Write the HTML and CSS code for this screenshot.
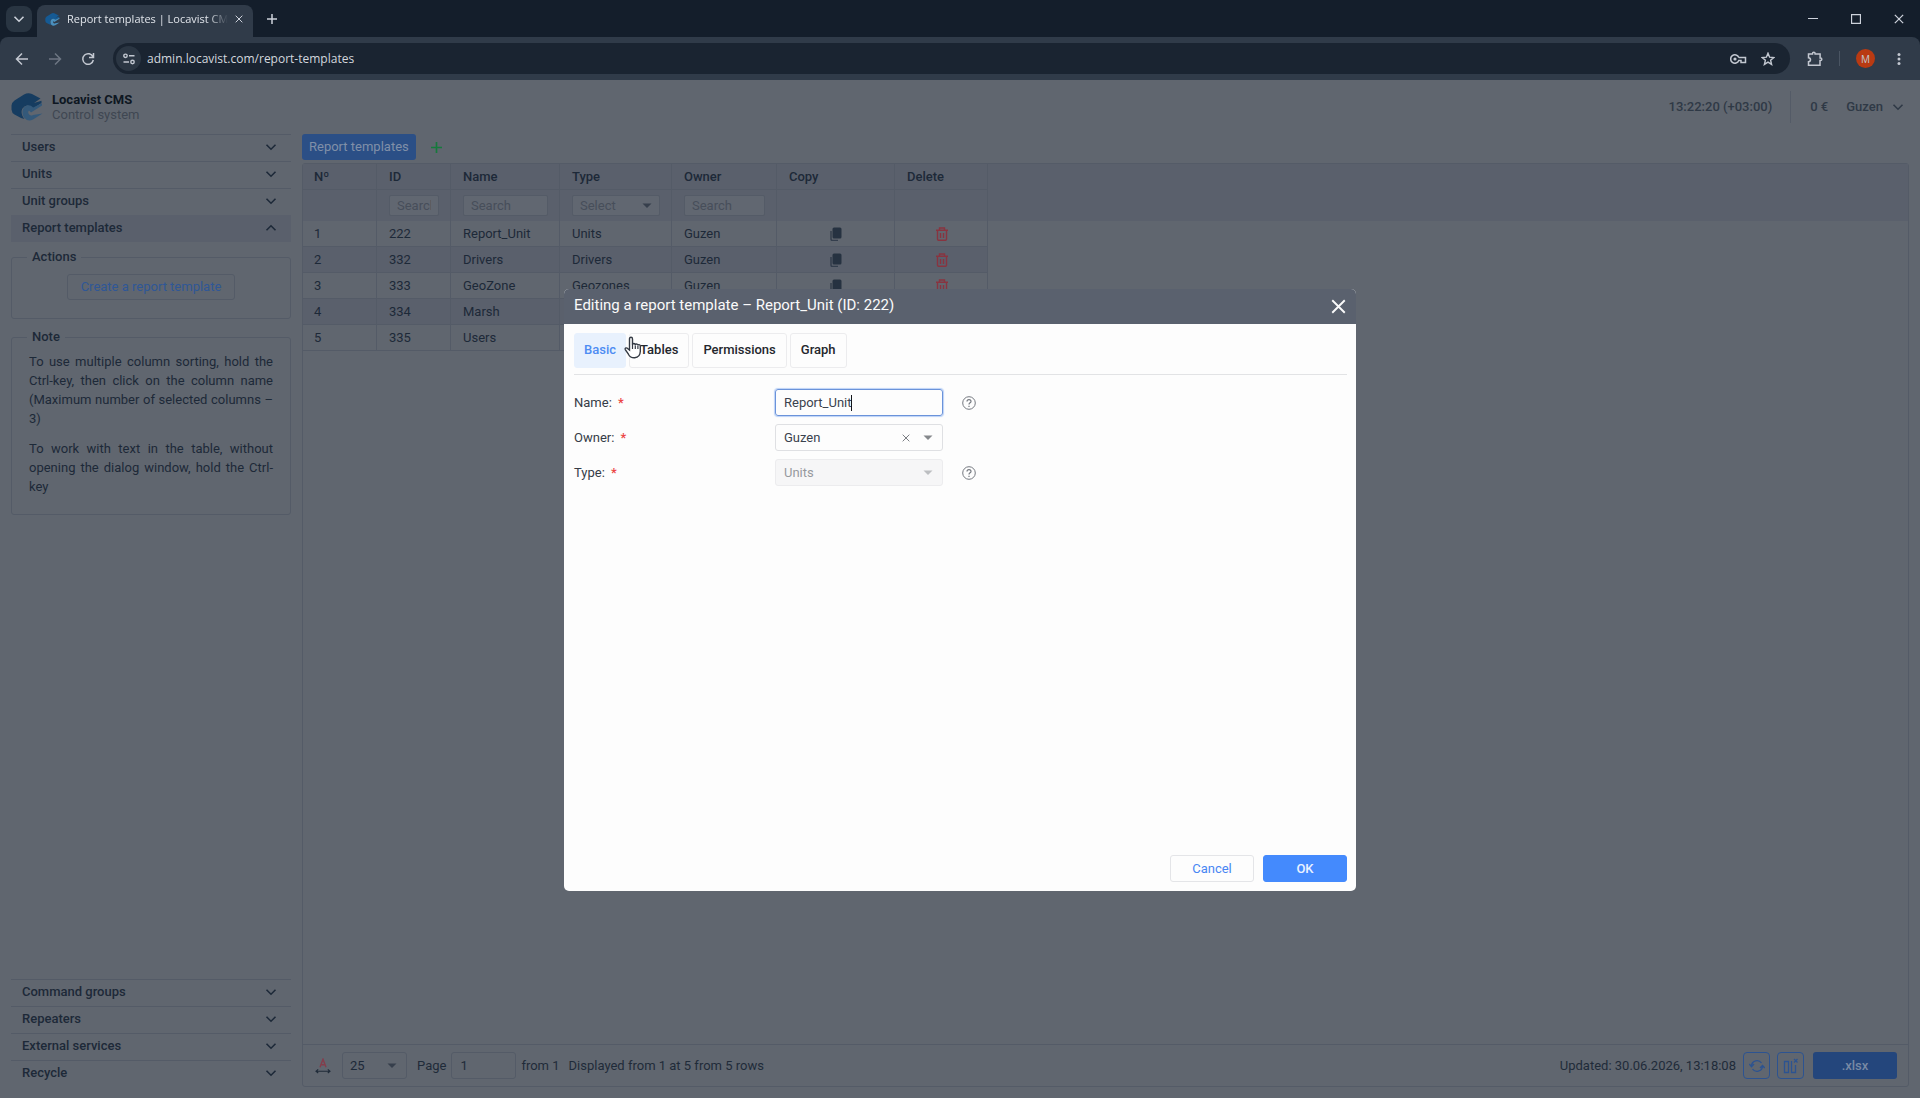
FILE: index.html
```html
<!DOCTYPE html>
<html lang="en">
<head>
<meta charset="utf-8">
<title>Report templates | Locavist CMS</title>
<link rel="stylesheet" href="styles.css">
</head>
<body>
<svg class="defs" width="0" height="0" aria-hidden="true">
  <symbol id="chev" viewBox="0 0 12 12"><path d="M1.500 3.800 6 8.200l4.500-4.400" fill="none" stroke="currentColor" stroke-width="1.600"/></symbol>
  <symbol id="caret" viewBox="0 0 10 6"><path d="M.5.500h9L5 5z" fill="currentColor"/></symbol>
  <symbol id="cross" viewBox="0 0 12 12"><path d="M1 1l10 10M11 1 1 11" fill="none" stroke="currentColor" stroke-width="1.500"/></symbol>
  <symbol id="plus" viewBox="0 0 12 12"><path d="M6 0v12M0 6h12" fill="none" stroke="currentColor" stroke-width="1.800"/></symbol>
  <symbol id="logo" viewBox="0 0 32 28">
    <path d="M13 1.500Q17-.8 21 1L29.500 5.500 23 10 30.500 7.800V10L22 15.500Q16 9.500 11.500 15.500C9.500 19 11 23 13.500 26L10 25 3.500 21.500Q.8 20 .5 16.500V12.500Q.8 9.500 3.500 7.500z" fill="var(--logo-a)"/>
    <path d="M31.500 20.500 22 26.500Q16.500 29 13 24.500C9.500 18.500 12.500 12.500 17 12.200Q20 12 22.200 14.500L31 10.300V12.500L20 19.500 18 17.500Q16.800 18.500 17.500 20.500 19 23.500 22 22z" fill="var(--logo-b)"/>
  </symbol>
  <symbol id="copy" viewBox="0 0 12 14"><path d="M1 4v8q0 1.500 1.500 1.500H8" fill="none" stroke="currentColor" stroke-width="1.500" opacity=".75"/><rect x="2.500" y=".5" width="9" height="11" rx="1.500" fill="currentColor"/></symbol>
  <symbol id="trash" viewBox="0 0 12 14"><path d="M0 3.200h12M3.500 3V1h5v2M1.500 3.200v9q0 1.100 1.100 1.100h6.800q1.100 0 1.100-1.100v-9M4.500 6v5M7.500 6v5" fill="none" stroke="currentColor" stroke-width="1.400"/></symbol>
  <symbol id="help" viewBox="0 0 14 14"><circle cx="7" cy="7" r="6.300" fill="none" stroke="currentColor"/><path d="M5 5.600C5 3 9 3 9 5.400 9 6.900 7 6.800 7 8.500M7 9.700v1.300" fill="none" stroke="currentColor" stroke-width="1.200"/></symbol>
</svg>

<header class="browser">
  <div class="tabstrip">
    <button class="tab-search" aria-label="Search tabs"><svg width="12" height="12"><use href="#chev"/></svg></button>
    <div class="browser-tab">
      <svg class="favicon" width="15" height="13"><use href="#logo"/></svg>
      <span class="tab-title">Report templates | Locavist CMS</span>
      <button aria-label="Close tab"><svg width="8" height="8"><use href="#cross"/></svg></button>
    </div>
    <button class="new-tab" aria-label="New tab"><svg width="10" height="10"><use href="#plus"/></svg></button>
    <div class="window-buttons">
      <button aria-label="Minimize"><svg width="10" height="10" viewBox="0 0 10 10"><path d="M0 4.500h10" stroke="currentColor"/></svg></button>
      <button aria-label="Maximize"><svg width="10" height="10" viewBox="0 0 10 10"><path d="M.5.500h9v9h-9z" fill="none" stroke="currentColor" stroke-width="1.300"/></svg></button>
      <button aria-label="Close"><svg width="10" height="10"><use href="#cross"/></svg></button>
    </div>
  </div>
  <div class="toolbar">
    <button aria-label="Back"><svg width="14" height="14" viewBox="0 0 14 14"><path d="M13 7H2M7 1.500 1.500 7 7 12.500" fill="none" stroke="currentColor" stroke-width="1.500"/></svg></button>
    <button class="dim" aria-label="Forward"><svg width="14" height="14" viewBox="0 0 14 14"><path d="M1 7h11M7 1.500 12.500 7 7 12.500" fill="none" stroke="currentColor" stroke-width="1.500"/></svg></button>
    <button aria-label="Reload"><svg width="14" height="14" viewBox="0 0 14 14"><path d="M12 5A5.300 5.300 0 1 0 12.300 8M12.500 1v4.500H8" fill="none" stroke="currentColor" stroke-width="1.500"/></svg></button>
    <div class="address">
      <span class="site-info"><svg width="12" height="12" viewBox="0 0 12 12"><g fill="none" stroke="currentColor" stroke-width="1.400"><circle cx="2.500" cy="2.800" r="1.700"/><path d="M6 2.800h5.500M.5 9H6"/><circle cx="9.500" cy="9" r="1.700"/></g></svg></span>
      <input type="text" aria-label="Address" value="admin.locavist.com/report-templates">
      <svg width="17" height="10" viewBox="0 0 17 10"><g fill="none" stroke="currentColor" stroke-width="1.500"><path d="M8.800 3.500a4.200 4.200 0 1 0 0 3H11V8.500h4.500v-5H8.800"/></g><circle cx="5" cy="5" r="1.600" fill="currentColor"/></svg>
      <svg width="14" height="14" viewBox="0 0 14 14"><path d="M7 1.200 8.600 5.200l4.200.3-3.200 2.700 1 4.200L7 10.100l-3.600 2.300 1-4.200L1.200 5.500l4.200-.3z" fill="none" stroke="currentColor" stroke-width="1.400"/></svg>
    </div>
    <button class="ext" aria-label="Extensions"><svg width="16" height="16" viewBox="0 0 16 16"><path d="M2.500 3H5.500V2.500a1.300 1.300 0 0 1 2.600 0V3h5v4h.4a1.300 1.300 0 0 1 0 2.600H13v4.600H1.500v-3.500q2-.2 2-2t-2-2V3z" fill="none" stroke="currentColor" stroke-width="1.500"/></svg></button>
    <span class="bar"></span>
    <button class="avatar">M</button>
    <button class="more" aria-label="Menu"><svg width="4" height="12" viewBox="0 0 4 12"><g fill="currentColor"><circle cx="2" cy="1.500" r="1.500"/><circle cx="2" cy="6" r="1.500"/><circle cx="2" cy="10.500" r="1.500"/></g></svg></button>
  </div>
</header>

<div class="app">
  <header class="app-header">
    <svg class="app-logo" width="32" height="28"><use href="#logo"/></svg>
    <div class="brand"><strong>Locavist CMS</strong><span>Control system</span></div>
    <time class="clock">13:22:20 (+03:00)</time>
    <span class="balance">0 €</span>
    <button class="user">Guzen <svg width="12" height="12"><use href="#chev"/></svg></button>
  </header>

  <div class="columns">
    <nav class="sidebar">
      <button class="item">Users<svg width="12" height="12"><use href="#chev"/></svg></button>
      <button class="item">Units<svg width="12" height="12"><use href="#chev"/></svg></button>
      <button class="item">Unit groups<svg width="12" height="12"><use href="#chev"/></svg></button>
      <button class="item open">Report templates<svg width="12" height="12"><use href="#chev"/></svg></button>
      <fieldset class="group actions">
        <legend>Actions</legend>
        <button class="create">Create a report template</button>
      </fieldset>
      <fieldset class="group note">
        <legend>Note</legend>
        <p>To use multiple column sorting, hold the Ctrl-key, then click on the column name (Maximum number of selected columns – 3)</p>
        <p>To work with text in the table, without opening the dialog window, hold the Ctrl-key</p>
      </fieldset>
      <div class="lower">
        <button class="item">Command groups<svg width="12" height="12"><use href="#chev"/></svg></button>
        <button class="item">Repeaters<svg width="12" height="12"><use href="#chev"/></svg></button>
        <button class="item">External services<svg width="12" height="12"><use href="#chev"/></svg></button>
        <button class="item">Recycle<svg width="12" height="12"><use href="#chev"/></svg></button>
      </div>
    </nav>

    <main class="main">
      <div class="views">
        <button class="view">Report templates</button>
        <button class="add" aria-label="Add"><svg width="11" height="11"><use href="#plus"/></svg></button>
      </div>
      <section class="panel">
        <div class="grid-area">
          <table class="grid">
            <colgroup><col class="c-no"><col class="c-id"><col class="c-name"><col class="c-type"><col class="c-owner"><col class="c-copy"><col class="c-delete"></colgroup>
            <thead>
              <tr class="heads"><th>Nº</th><th>ID</th><th>Name</th><th>Type</th><th>Owner</th><th>Copy</th><th>Delete</th></tr>
              <tr class="filters">
                <td></td>
                <td><input type="text" placeholder="Search" aria-label="Search ID"></td>
                <td><input type="text" placeholder="Search" aria-label="Search name"></td>
                <td><div class="pick"><select aria-label="Select type"><option>Select</option></select><svg width="10" height="6"><use href="#caret"/></svg></div></td>
                <td><input type="text" placeholder="Search" aria-label="Search owner"></td>
                <td></td><td></td>
              </tr>
            </thead>
            <tbody>
              <tr><td>1</td><td>222</td><td>Report_Unit</td><td>Units</td><td>Guzen</td><td class="act"><button aria-label="Copy"><svg width="12" height="14"><use href="#copy"/></svg></button></td><td class="act del"><button aria-label="Delete"><svg width="12" height="14"><use href="#trash"/></svg></button></td></tr>
              <tr><td>2</td><td>332</td><td>Drivers</td><td>Drivers</td><td>Guzen</td><td class="act"><button aria-label="Copy"><svg width="12" height="14"><use href="#copy"/></svg></button></td><td class="act del"><button aria-label="Delete"><svg width="12" height="14"><use href="#trash"/></svg></button></td></tr>
              <tr><td>3</td><td>333</td><td>GeoZone</td><td>Geozones</td><td>Guzen</td><td class="act"><button aria-label="Copy"><svg width="12" height="14"><use href="#copy"/></svg></button></td><td class="act del"><button aria-label="Delete"><svg width="12" height="14"><use href="#trash"/></svg></button></td></tr>
              <tr><td>4</td><td>334</td><td>Marsh</td><td></td><td></td><td></td><td></td></tr>
              <tr><td>5</td><td>335</td><td>Users</td><td></td><td></td><td></td><td></td></tr>
            </tbody>
          </table>
        </div>
        <footer class="pager">
          <button class="fit" aria-label="Fit width"><svg width="16" height="16" viewBox="0 0 16 16"><path d="M5 9.300 8 1.200l3 8.100M6 6.800h4" fill="none" stroke="#843d4c" stroke-width="1.400"/><path d="M1.500 13.200h13M3.200 11.400 1 13.200l2.200 1.800M12.800 11.400l2.200 1.800-2.200 1.800" fill="none" stroke="currentColor" stroke-width="1.100"/></svg></button>
          <div class="pick"><select aria-label="Rows per page"><option>25</option></select><svg width="10" height="6"><use href="#caret"/></svg></div>
          <label for="page">Page</label>
          <input id="page" type="text" value="1">
          <span class="from">from 1</span>
          <span class="shown">Displayed from 1 at 5 from 5 rows</span>
          <span class="updated">Updated: 30.06.2026, 13:18:08</span>
          <button class="square" aria-label="Refresh"><svg width="16" height="14" viewBox="0 0 16 14"><path d="M2.500 6.500A5.500 5.500 0 0 1 12.500 4M13.500 7.500A5.500 5.500 0 0 1 3.500 10M.3 5l2.200 2.700L5 5M11 9l2.500-2.500L15.700 9" fill="none" stroke="currentColor" stroke-width="1.300"/></svg></button>
          <button class="square" aria-label="Reset columns"><svg width="16" height="16" viewBox="0 0 16 16"><path d="M1.500 3.500H5.500v11H1.500zM8.500 3v11.500H12.500V7M11 1l3.500 3.500M14.500 1 11 4.500" fill="none" stroke="currentColor" stroke-width="1.300"/></svg></button>
          <button class="export">.xlsx</button>
        </footer>
      </section>
    </main>
  </div>

  <div class="overlay">
    <section class="dialog" role="dialog" aria-labelledby="dialog-title">
      <header class="dialog-head">
        <h2 id="dialog-title">Editing a report template – Report_Unit (ID: 222)</h2>
        <button aria-label="Close"><svg width="15" height="15"><use href="#cross"/></svg></button>
      </header>
      <div class="dialog-body">
        <div class="tabs">
          <button class="tab active">Basic</button><button class="tab">Tables</button><button class="tab">Permissions</button><button class="tab">Graph</button>
        </div>
        <form class="form">
          <label for="name">Name: <b>*</b></label>
          <div class="field focused"><input id="name" type="text" value="Report_Unit"><i class="text-caret"></i></div>
          <svg class="help" width="14" height="14"><use href="#help"/></svg>
          <label for="owner">Owner: <b>*</b></label>
          <div class="field"><select id="owner"><option>Guzen</option></select><button type="button" aria-label="Clear"><svg width="8" height="8"><use href="#cross"/></svg></button><svg width="10" height="6"><use href="#caret"/></svg></div>
          <span></span>
          <label for="type">Type: <b>*</b></label>
          <div class="field off"><select id="type" disabled><option>Units</option></select><svg width="10" height="6"><use href="#caret"/></svg></div>
          <svg class="help" width="14" height="14"><use href="#help"/></svg>
        </form>
        <div class="dialog-foot">
          <button class="cancel">Cancel</button><button class="ok">OK</button>
        </div>
      </div>
      <svg class="pointer" width="18" height="24" viewBox="0 0 18 24"><path d="M5.500 14V3q0-1.700 1.500-1.700T8.500 3v6q0-1.500 1.400-1.500t1.400 1.700q0-1.300 1.300-1.200t1.300 1.600q.1-1.100 1.200-1 1.200.1 1.200 1.500v5.400q-.3 5.800-5.600 6.300-4.400.2-6.300-3.600L1.300 13.600q-.5-1.300.6-1.700 1-.3 2 .9z" fill="#fff" stroke="#343a44" stroke-width="1.400"/><path d="M8.500 9v4M11.300 9.500V13M13.900 10v3" stroke="#343a44" stroke-width="1.200"/></svg>
    </section>
  </div>
</div>
</body>
</html>
```
FILE: styles.css
```css
:root {
  --page: #60666f;
  --band: #5a606c;
  --line: #545b67;
  --ink: #1d2938;
  --soft: #2f3946;
  --blue: #2b4f86;
  --logo-a: #163c60;
  --logo-b: #34597a;
}
* { box-sizing: border-box; }
body {
  margin: 0;
  min-height: 100vh;
  display: flex;
  flex-direction: column;
  background: var(--page);
  color: var(--ink);
  font: 13px/18px Roboto, "Liberation Sans", sans-serif;
}
button, input, select { font: inherit; color: inherit; }
button { background: none; border: 0; padding: 0; display: flex; align-items: center; justify-content: center; }
input, select { min-width: 0; border: 0; outline: 0; background: none; appearance: none; padding: 0; margin: 0; }
select:disabled { opacity: 1; }
svg { flex: none; display: block; }
.defs { position: absolute; }

/* browser frame */
.browser { background: #141e2b; color: #cdd2db; font: 12px/16px "Open Sans", "Noto Sans", sans-serif; }
.tabstrip { display: flex; align-items: center; height: 37px; padding-left: 6px; }
.tab-search { width: 26px; height: 26px; border-radius: 8px; background: #293542; }
.browser-tab {
  display: flex; align-items: center; gap: 7px;
  width: 216px; height: 32px; align-self: flex-end; margin-left: 5px; padding: 0 10px 4px 8px;
  border-radius: 8px 8px 0 0; background: #303b49;
}
.favicon { --logo-a: #155a94; --logo-b: #4a8fbd; }
.tab-title {
  flex: 1; overflow: hidden; white-space: nowrap; font-size: 11px; color: #dfe3e9;
  mask-image: linear-gradient(90deg, #000 88%, transparent);
}
.new-tab { width: 26px; height: 26px; margin-left: 6px; }
.window-buttons { display: flex; margin-left: auto; }
.window-buttons button { width: 43px; height: 36px; }
.toolbar { display: flex; align-items: center; height: 43px; padding: 0 12px 0 5px; background: #303b49; border-radius: 8px 8px 0 0; color: #c3c8d1; }
.toolbar > button { width: 33px; height: 30px; }
.toolbar .dim { color: #6d7683; }
.address {
  flex: 1; display: flex; align-items: center; gap: 14px;
  height: 31px; margin-left: 9px; padding: 0 15px 0 3px; border-radius: 16px; background: #1a2431;
}
.address input { flex: 1; margin-left: -8px; color: #d3d7de; }
.site-info { display: flex; align-items: center; justify-content: center; width: 25px; height: 25px; border-radius: 50%; background: #2b3643; }
.toolbar > .ext { width: 48px; margin-left: 1px; }
.bar { width: 1px; height: 15px; background: #4a5563; }
.toolbar > .avatar { width: 19px; height: 19px; margin: 0 16px; border-radius: 50%; background: #b93a12; font-size: 10px; }
.toolbar > .more { width: 18px; margin-right: 0; margin-left: -1px; }

/* application */
.app { position: relative; flex: 1; display: flex; flex-direction: column; }
.app-header { display: flex; align-items: center; height: 54px; padding: 0 16px 0 11px; color: var(--soft); font-weight: 500; }
.brand { display: flex; flex-direction: column; margin-left: 9px; line-height: 15px; font-weight: 400; color: #3f4752; }
.brand strong { color: #0e1722; font-weight: 700; }
.clock { margin-left: auto; }
.balance { margin-left: 18px; padding-left: 19px; line-height: 32px; border-left: 1px solid var(--line); }
.user { gap: 9px; margin-left: 18px; font-weight: 500; }
.columns { flex: 1; display: flex; gap: 11px; padding: 0 11px; }

.sidebar { display: flex; flex-direction: column; width: 280px; padding-bottom: 11px; }
.item {
  justify-content: space-between; width: 100%; height: 27px; padding: 0 14px 2px 11px;
  border-top: 1px solid var(--line); font-weight: 500;
}
.item.open { background: var(--band); border-color: var(--band); }
.item.open svg { transform: rotate(180deg); }
.group { margin: 6px 0 0; padding: 0 17px; border: 1px solid var(--line); border-radius: 3px; }
.group legend { margin-left: -2px; padding: 0 5px; font-weight: 500; }
.actions { height: 71px; }
.create { width: 168px; height: 26px; margin: 8px auto 0; border: 1px solid var(--line); border-radius: 3px; color: #2f5796; }
.note { margin-top: 9px; height: 187px; text-align: justify; }
.note p { margin: 6px 0 11px; line-height: 19px; }
.note p + p { margin-top: 0; }
.lower { margin-top: auto; }

.main { flex: 1; display: flex; flex-direction: column; min-width: 0; padding-bottom: 11px; }
.views { display: flex; gap: 15px; height: 29px; }
.view { height: 26px; padding: 0 7px; border-radius: 3px; background: var(--blue); color: #808fa8; }
.add { height: 26px; width: 12px; color: #167a3c; }
.panel { flex: 1; display: flex; flex-direction: column; border: 1px solid var(--line); border-radius: 3px; }
.grid-area { flex: 1; background: linear-gradient(var(--band), var(--band)) 0 0 / 100% 57px no-repeat; }
.grid { table-layout: fixed; width: 685px; border-collapse: separate; border-spacing: 0; }
.c-no, .c-id { width: 74px; }
.c-name { width: 109px; }
.c-type { width: 112px; }
.c-owner { width: 105px; }
.c-copy { width: 118px; }
.c-delete { width: 93px; }
.grid th, .grid td { height: 26px; padding: 0 11px 0 12px; text-align: left; border-right: 1px solid var(--line); border-bottom: 1px solid var(--line); }
.grid tr > :first-child { padding-left: 11px; }
.grid th { font-weight: 500; }
.grid .filters td { height: 31px; border-bottom: 0; }
.grid tbody tr:nth-child(even) { background: var(--band); }
.filters input, .filters .pick { display: flex; width: 100%; height: 21px; margin: 0; padding: 0 7px; border-radius: 2px; background: #616771; border: 1px solid var(--line); }
.filters .pick select, .filters input::placeholder { color: #474e5a; opacity: 1; }
.pick { display: flex; align-items: center; border: 1px solid var(--line); border-radius: 3px; color: #363f4c; }
.pick select { flex: 1; color: var(--ink); }
.act button { margin: 0 auto; color: #263241; }
.del button { color: #883440; }

.pager { display: flex; align-items: center; height: 42px; padding: 0 11px 0 12px; border-top: 1px solid var(--line); color: #1f2b39; }
.pager .pick { width: 65px; height: 27px; margin: 0 10px 0 11px; padding: 0 9px 0 7px; }
.pager > input { width: 65px; height: 27px; margin: 0 5px; padding: 0 8px; border: 1px solid var(--line); border-radius: 3px; }
.shown { margin-left: 9px; }
.updated { margin-left: auto; }
.square { width: 27px; height: 27px; margin-left: 7px; border: 1px solid #2c5391; border-radius: 4px; color: #2c5391; }
.export { width: 84px; height: 27px; margin-left: 9px; border-radius: 3px; background: #24467c; color: #7889a4; font-weight: 500; }

/* dialog */
.overlay { position: absolute; inset: 0; display: flex; align-items: center; justify-content: center; padding-top: 2px; }
.dialog { position: relative; display: flex; flex-direction: column; width: 792px; min-height: 602px; border-radius: 5px; overflow: hidden; background: #fdfdfd; }
.dialog-head { display: flex; align-items: center; justify-content: space-between; height: 35px; padding: 0 10px; background: #5a616e; color: #fafafa; }
.dialog-head h2 { margin: 0; padding-bottom: 3px; font-size: 15px; font-weight: 400; }
.dialog-body { flex: 1; display: flex; flex-direction: column; padding: 9px 9px 9px 10px; }
.tabs { display: flex; gap: 3px; padding-bottom: 6px; border-bottom: 1px solid #e2e3e5; }
.tab { height: 35px; padding: 0 10px 2px; border: 1px solid #ececee; border-radius: 3px; color: #24272d; font-weight: 500; }
.tab.active { padding: 0 9px 2px; background: #e8f1fd; border-color: #e8f1fd; color: #4e8cf3; }
.form { display: grid; grid-template-columns: 182px 168px 14px; column-gap: 19px; row-gap: 8px; align-items: center; padding-top: 14px; }
.form label { color: #353c47; }
.form b { margin-left: 3px; color: #ec4545; font-weight: 500; }
.field { position: relative; display: flex; align-items: center; height: 27px; padding: 0 9px 0 8px; border: 1px solid #dfe0e3; border-radius: 3px; color: #3a424e; }
.field input, .field select { flex: 1; }
.field button { margin-right: 13px; color: #7b7e83; }
.field > svg { color: #85888c; }
.field.focused { border-color: #6b93da; box-shadow: 0 0 1px 1px #bcd2f7; }
.field.off { background: #f6f6f7; border-color: #ececee; color: #96999e; }
.field.off > svg { color: #bcbec1; }
.text-caret { position: absolute; left: 75px; width: 1px; height: 16px; background: #14161a; }
.help { color: #74787f; }
.form { grid-template-columns: 182px 168px 14px; column-gap: 19px; }
.form > label { margin-right: 0; }
.dialog-foot { display: flex; justify-content: flex-end; gap: 9px; margin-top: auto; }
.dialog-foot button { width: 84px; height: 27px; border: 1px solid #e4e5e8; border-radius: 3px; color: #4886f3; }
.dialog-foot .ok { background: #448afd; border-color: #448afd; color: #eaf2ff; font-weight: 500; }
.pointer { position: absolute; left: 60px; top: 47px; }
```
